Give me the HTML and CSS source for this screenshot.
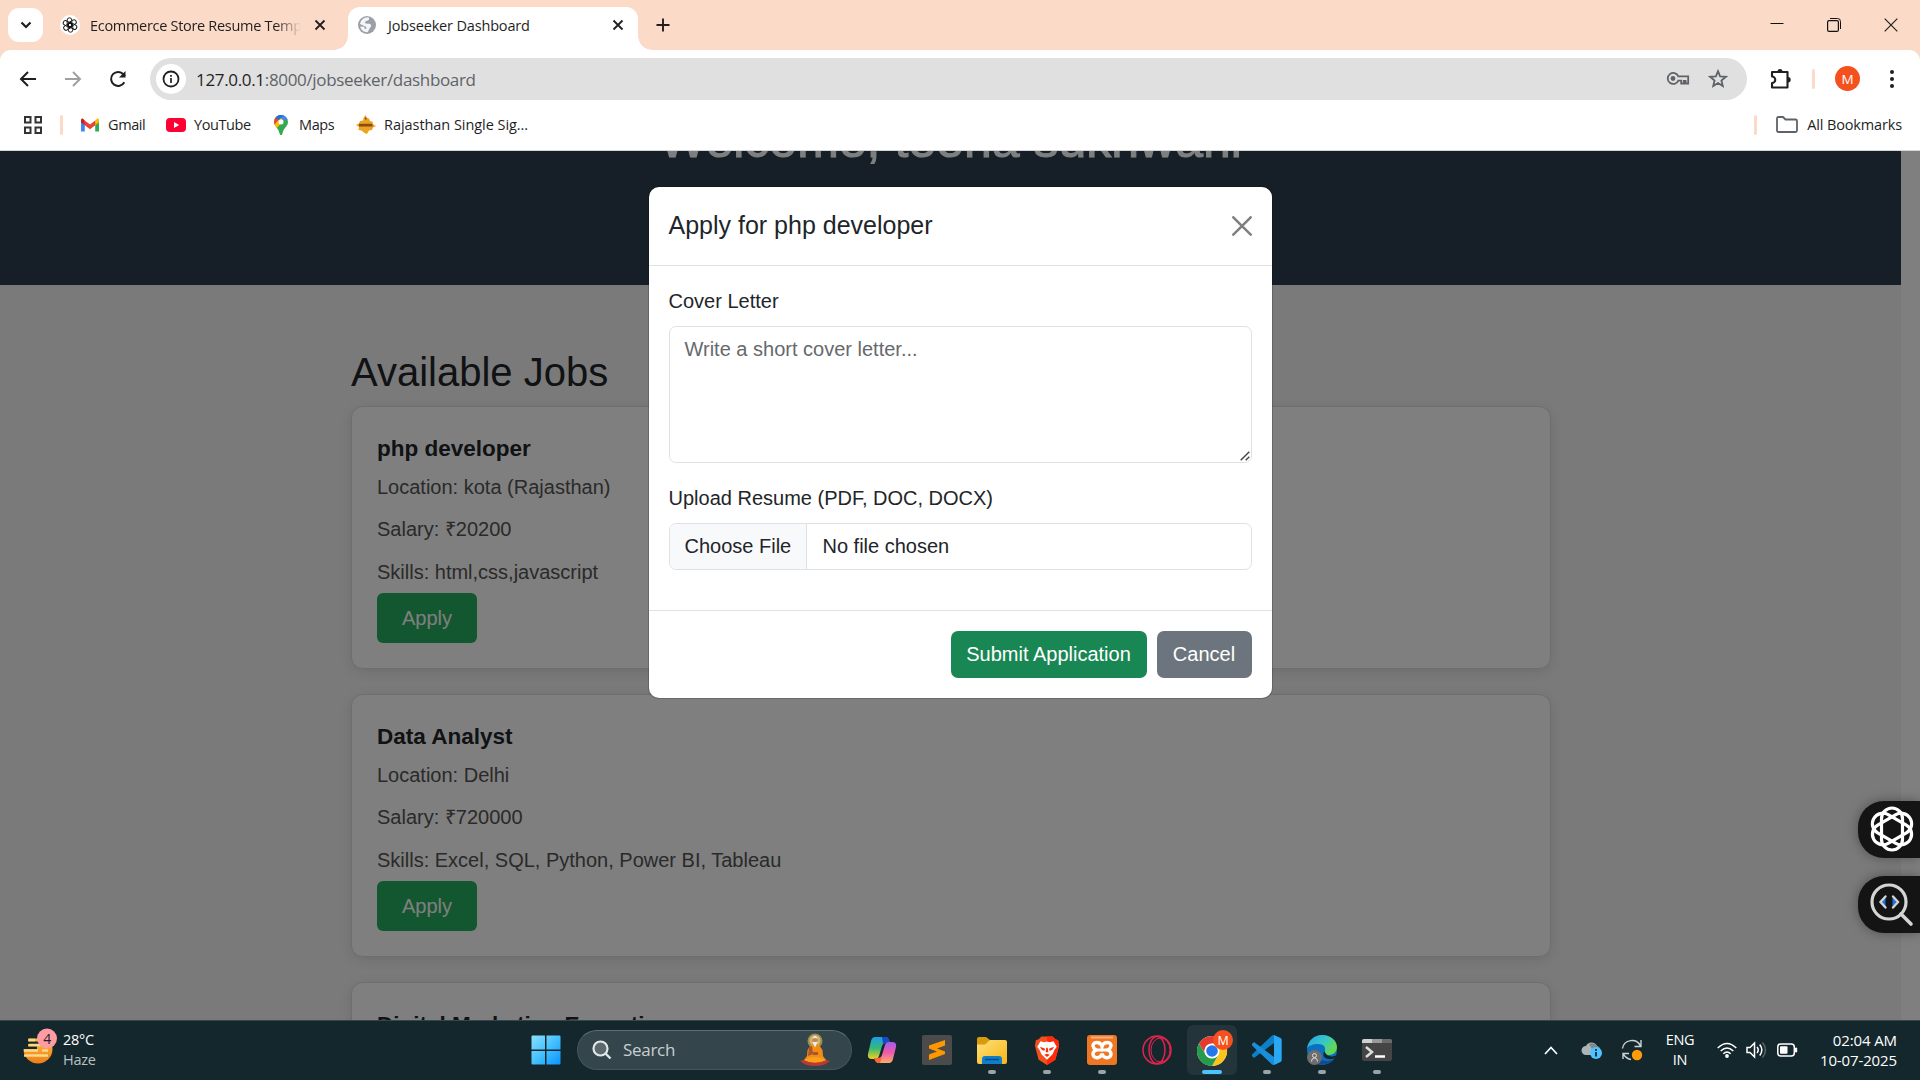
FILE: index.html
```html
<!DOCTYPE html>
<html lang="en">
<head>
<meta charset="utf-8">
<title>Jobseeker Dashboard</title>
<link rel="stylesheet" href="styles.css">
</head>
<body>
<div class="screen">
  <header class="tabstrip">
    <button class="tab-search"><svg width="12" height="8" viewBox="0 0 12 8"><path d="M1.500 1.500 6 6l4.500-4.500" fill="none" stroke="#1f1f1f" stroke-width="2.200"/></svg></button>
    <div class="tab">
      <svg class="favicon" width="20" height="20" viewBox="0 0 20 20"><circle cx="10" cy="10" r="10" fill="#fff"/><g fill="none" stroke="#111" stroke-width=".9"><rect id="k" x="7.200" y="2.800" width="4.600" height="9" rx="2.300"/><use href="#k" transform="rotate(60 10 10)"/><use href="#k" transform="rotate(120 10 10)"/><use href="#k" transform="rotate(180 10 10)"/><use href="#k" transform="rotate(240 10 10)"/><use href="#k" transform="rotate(300 10 10)"/></g></svg>
      <span class="tab-title fade">Ecommerce Store Resume Temp</span>
      <svg class="x" width="12" height="12" viewBox="0 0 12 12"><path d="M1.500 1.500l9 9M10.500 1.500l-9 9" stroke="#1f1f1f" stroke-width="1.800"/></svg>
    </div>
    <div class="tab active">
      <svg class="favicon" width="20" height="20" viewBox="0 0 20 20"><circle cx="10" cy="10" r="9" fill="#9aa0a6"/><path d="M11 2.200c2 .8 1.200 2.800-.2 3.400-1.300.6-2.800.5-2.800 2 0 1.200 2 1.200 4 1.200 2.500 0 2.800 2.600 1.200 3.700-1.200.8-1.200 3.500-2.700 4.700-3.800.2-6.700-2.500-7.200-5.700l4.200.3v2l1.800.2c.4-1.400-.3-3-2-3L3 9c.6-4 4-7 8-6.800z" fill="#f4f5f6"/></svg>
      <span class="tab-title">Jobseeker Dashboard</span>
      <svg class="x" width="12" height="12" viewBox="0 0 12 12"><path d="M1.500 1.500l9 9M10.500 1.500l-9 9" stroke="#1f1f1f" stroke-width="1.800"/></svg>
    </div>
    <svg class="plus" width="14" height="14" viewBox="0 0 14 14"><path d="M7 .5v13M.5 7h13" stroke="#1f1f1f" stroke-width="1.900"/></svg>
    <div class="window-controls">
      <svg width="14" height="14" viewBox="0 0 14 14"><path d="M.5 5.500h13" stroke="#111"/></svg>
      <svg width="14" height="14" viewBox="0 0 14 14"><path d="M3 .5h7.500a3 3 0 0 1 3 3V11" fill="none" stroke="#111"/><rect x=".6" y="2.600" width="10.800" height="10.800" rx="1.500" fill="none" stroke="#111" stroke-width="1.200"/></svg>
      <svg width="14" height="14" viewBox="0 0 14 14"><path d="M.7.7l12.600 12.600M13.300.7.7 13.300" stroke="#222" stroke-width="1.200"/></svg>
    </div>
  </header>

  <div class="toolbar">
    <svg width="24" height="24" viewBox="0 0 24 24"><path d="M12 5l-7 7 7 7M5.500 12H20" fill="none" stroke="#1f1f1f" stroke-width="2"/></svg>
    <svg width="24" height="24" viewBox="0 0 24 24"><path d="M12 5l7 7-7 7M18.500 12H4" fill="none" stroke="#a0a0a0" stroke-width="2"/></svg>
    <svg width="24" height="24" viewBox="0 0 24 24"><path d="M18.300 15.200A7 7 0 1 1 17.500 7.500L19 9" fill="none" stroke="#1f1f1f" stroke-width="2"/><path d="M19.500 4v6.500H13z" fill="#1f1f1f"/></svg>
    <div class="omnibox">
      <span class="info"><svg width="18" height="18" viewBox="0 0 18 18"><circle cx="9" cy="9" r="7.500" fill="none" stroke="#222" stroke-width="1.800"/><path d="M9 8v5M9 5v1.800" stroke="#222" stroke-width="1.700"/></svg></span>
      <span class="url"><b>127.0.0.1</b>:8000/jobseeker/dashboard</span>
      <svg class="key" width="24" height="16" viewBox="0 0 24 16"><path d="M12.300 5.300H22.200V12.500h-2.600V9.800h-1.800v2.700h-2.600V9.600h-2.900a5.500 5.500 0 1 1 0-4.300z" fill="none" stroke="#5f6368" stroke-width="1.800"/><circle cx="7" cy="7.500" r="2.400" fill="#5f6368"/></svg>
      <svg width="20" height="20" viewBox="0 0 20 20"><path d="M10 2.200l2.100 5.200 5.700.4-4.400 3.700 1.400 5.500-4.800-3-4.800 3 1.400-5.500L2.200 7.800l5.700-.4z" fill="none" stroke="#5f6368" stroke-width="1.800"/></svg>
    </div>
    <svg class="puzzle" width="24" height="24" viewBox="0 0 24 24"><path d="M3 5h15.500v15.500H3v-4.500a3 3 0 0 0 0-6.500z" fill="none" stroke="#1f1f1f" stroke-width="2.100" stroke-linejoin="round"/><path d="M8.500 4.500a2.500 2.500 0 0 1 5 0zM19 10a2.700 2.700 0 0 1 0 5.400z" fill="#1f1f1f"/></svg>
    <i class="sep"></i>
    <span class="avatar">M</span>
    <svg class="dots" width="6" height="20" viewBox="0 0 6 20"><g fill="#1f1f1f"><circle cx="3" cy="3" r="2"/><circle cx="3" cy="10" r="2"/><circle cx="3" cy="17" r="2"/></g></svg>
  </div>

  <nav class="bookmarks">
    <svg class="apps" width="18" height="18" viewBox="0 0 18 18"><path d="M1 1h5.500v5.500H1zM11.500 1H17v5.500h-5.500zM1 11.500h5.500V17H1zM11.500 11.500H17V17h-5.500z" fill="none" stroke="#333" stroke-width="2"/></svg>
    <i class="sep"></i>
    <span class="bm gmail"><svg width="20" height="16" viewBox="0 0 20 16"><path d="M1 3v11.500h3.800V6z" fill="#4285f4"/><path d="M19 3v11.500h-3.800V6z" fill="#34a853"/><path d="M15.200 3.500 17 1.800c1-.6 2 0 2 1.200v2.200l-3.800 3z" fill="#fbbc04"/><path d="M4.800 3.500 3 1.800C2 1.200 1 1.800 1 3v2.200l3.800 3z" fill="#c5221f"/><path d="M4.800 3.500 10 7.500l5.200-4v4.700L10 12.300 4.800 8.200z" fill="#ea4335"/></svg><span>Gmail</span></span>
    <span class="bm yt"><svg width="20" height="16" viewBox="0 0 20 16"><rect y="1" width="20" height="14" rx="4" fill="#ff0033"/><path d="M8 5l5.200 3L8 11z" fill="#fff"/></svg><span>YouTube</span></span>
    <span class="bm maps"><svg width="14" height="20" viewBox="0 0 14 20"><clipPath id="pin"><path d="M7 0a7 7 0 0 1 7 7c0 4-4.500 6-5.500 11.200C8.200 19.500 7.700 20 7 20s-1.200-.5-1.500-1.800C4.500 13 0 11 0 7a7 7 0 0 1 7-7z"/></clipPath><g clip-path="url(#pin)"><path d="M0 0h14v20H0z" fill="#34a853"/><path d="M0 0h14L3 13H0z" fill="#fbbc04"/><path d="M0 0h9L0 10z" fill="#ea4335"/><path d="M4 0h10v5L9 5z" fill="#4285f4"/><path d="M1 3 4 0h6L5 5z" fill="#1a73e8"/></g><circle cx="7" cy="7" r="2.500" fill="#fff"/></svg><span>Maps</span></span>
    <span class="bm raj"><svg width="20" height="20" viewBox="0 0 20 20"><path d="M9.500 0l1.500 3 2 .5 1 2.500 3 1-.5 2L20 11l-3 1.500-1 2.500-3 .5-2 3.500-2.500-1-3-2.500-3-.5L3 12 0 10l3-1.500L4 6l3-.500L7.500 3z" fill="#eda322"/><path d="M3 8.800h13.500v2.700H3z" fill="#8a4a12"/><path d="M9 2.500h1.500v2H9z" fill="#8a4a12"/></svg><span>Rajasthan Single Sig...</span></span>
    <i class="sep push"></i>
    <svg class="folder" width="22" height="17" viewBox="0 0 22 17"><path d="M1 14.500V2.500Q1 1 2.500 1H7l2.500 2.500h10Q21 3.500 21 5v9.500q0 1.500-1.500 1.500h-17Q1 16 1 14.500z" fill="none" stroke="#5f6368" stroke-width="1.800"/></svg>
    <span class="all">All Bookmarks</span>
  </nav>

  <div class="viewport">
    <div class="page">
      <section class="hero"><h1>Welcome, teena sukhwani</h1></section>
      <main class="container">
        <h2>Available Jobs</h2>
        <article class="job"><h5>php developer</h5><p>Location: kota (Rajasthan)</p><p>Salary: ₹20200</p><p>Skills: html,css,javascript</p><button class="apply">Apply</button></article>
        <article class="job"><h5>Data Analyst</h5><p>Location: Delhi</p><p>Salary: ₹720000</p><p>Skills: Excel, SQL, Python, Power BI, Tableau</p><button class="apply">Apply</button></article>
        <article class="job"><h5>Digital Marketing Executive</h5></article>
      </main>
    </div>
    <div class="backdrop">
      <div class="modal">
        <div class="modal-header"><h5>Apply for php developer</h5><svg width="20" height="20" viewBox="0 0 20 20"><path d="M1.300 1.300l17.400 17.400M18.700 1.300 1.300 18.700" stroke="#7f7f7f" stroke-width="2.500" stroke-linecap="round"/></svg></div>
        <div class="modal-body">
          <label>Cover Letter</label>
          <div class="letter-wrap">
            <textarea class="letter" placeholder="Write a short cover letter..."></textarea>
            <svg class="grip" width="10" height="10" viewBox="0 0 10 10"><path d="M.7 9.300 9.300.7M5.700 9.300 9.300 5.700" stroke="#444" stroke-width="1.400"/></svg>
          </div>
          <label>Upload Resume (PDF, DOC, DOCX)</label>
          <div class="file"><span class="choose">Choose File</span><span class="none">No file chosen</span></div>
        </div>
        <div class="modal-footer"><button class="btn submit">Submit Application</button><button class="btn cancel">Cancel</button></div>
      </div>
    </div>
    <div class="widgets">
      <div class="widget"><svg width="46" height="48" viewBox="-23 -24 46 48"><g fill="none" stroke="#fff" stroke-width="3.200"><rect id="w" x="-10.500" y="-21" width="21" height="42" rx="10.500"/><use href="#w" transform="rotate(60)"/><use href="#w" transform="rotate(120)"/></g></svg></div>
      <div class="widget"><svg width="46" height="48" viewBox="0 0 46 48"><circle cx="20" cy="22" r="17" fill="none" stroke="#d4d4d4" stroke-width="3.200"/><path d="M32 34l10 10" stroke="#d4d4d4" stroke-width="3.600" stroke-linecap="round"/><path d="M16.500 17.500v9l-4-4.500zM23.500 17.500v9l4-4.500z" fill="#1a73e8"/><path d="M16.500 16.500l-5 5.500 5 5.500M24 16.500l5 5.500-5 5.500" fill="none" stroke="#d4d4d4" stroke-width="2.400" stroke-linecap="round"/></svg></div>
    </div>
  </div>

  <footer class="taskbar">
    <div class="weather">
      <svg width="36" height="38" viewBox="0 0 36 38"><defs><linearGradient id="sun" x1="0" y1="0" x2="0" y2="1"><stop offset="0" stop-color="#ffc83d"/><stop offset="1" stop-color="#ef7d18"/></linearGradient></defs><circle cx="15" cy="21" r="14.500" fill="url(#sun)"/><path d="M0 6h30v4.500H0zM0 13.500h16V16H0zM0 18.500h14V21H0zM0 8h5v12H0z" fill="#14272d"/><path d="M6 12h6M6 17h12M1 22.500h14M19 22.500h6M1 27.500h24" stroke="#f7d98b" stroke-width="2.600"/><circle cx="24" cy="10.500" r="10" fill="#ff9ba3"/><text x="24" y="15.500" text-anchor="middle" font-size="14" fill="#222">4</text></svg>
      <div><div>28°C</div><div class="dim">Haze</div></div>
    </div>
    <svg class="start" width="30" height="30" viewBox="0 0 30 30"><defs><linearGradient id="win" x1="0" y1="0" x2="1" y2="1"><stop offset="0" stop-color="#8be0ff"/><stop offset=".5" stop-color="#45c1ff"/><stop offset="1" stop-color="#0a95ff"/></linearGradient></defs><path d="M.5 1.500Q.5.500 1.500.5H14v14H.5zM15.500.5h13q1 0 1 1v13h-14zM.5 16H14v13.500H1.500q-1 0-1-1zM15.500 16h14v12.500q0 1-1 1h-13z" fill="url(#win)"/></svg>
    <div class="search">
      <svg width="20" height="20" viewBox="0 0 20 20"><circle cx="8.500" cy="8.500" r="7" fill="#5b696e" stroke="#e2e6e7" stroke-width="2.200"/><path d="M13.500 13.500l5 5" stroke="#e2e6e7" stroke-width="2.400"/></svg>
      <span>Search</span>
      <svg class="guru" width="32" height="34" viewBox="0 0 32 34"><circle cx="16" cy="8" r="7.500" fill="#9c8b4c"/><circle cx="16" cy="7.500" r="5.500" fill="#cdb868"/><path d="M1 28q15-6 30 0-5 5-15 5T1 28z" fill="#b93a32"/><path d="M12 12q4-2 8 0l3.500 5 .5 6 3 4q-11 5-22 0l3-4 .5-6z" fill="#f28c16"/><path d="M10 14l3-1 1 8-5 2zM14 19h5v3h-5z" fill="#a8562a"/><path d="M5 27q11-6 22 0-11 5-22 0z" fill="#fba21d"/><ellipse cx="16" cy="7" rx="2.800" ry="3.800" fill="#c98556"/><path d="M13 6q3-6.500 6 0-3-2-6 0zM13.200 8.500q2.800 1 5.600 0l-2.800 6z" fill="#eee"/></svg>
    </div>
    <div class="tasks">
      <span class="task"><svg width="30" height="30" viewBox="0 0 30 30"><defs><linearGradient id="ca" x1="0" y1="0" x2="0" y2="1"><stop offset="0" stop-color="#1b9de8"/><stop offset=".5" stop-color="#35b878"/><stop offset="1" stop-color="#f5cf1d"/></linearGradient><linearGradient id="cb" x1="0" y1="0" x2="0" y2="1"><stop offset="0" stop-color="#a15cf0"/><stop offset=".5" stop-color="#ee5aa9"/><stop offset="1" stop-color="#ffac6b"/></linearGradient></defs><path d="M8 2h11q2 0 3 3l1 3h-4q-3 0-4 3l-3 10q-1 3-4 3H5q-5 0-4-5L4 6q1-4 4-4z" fill="url(#ca)"/><path d="M15 2h4q2 0 3 3l1 3h-4q-2 0-3 1z" fill="#1a48ca"/><path d="M22 28H11q-2 0-3-3l-1-2h4q3 0 4-3l3-10q1-3 4-3h3q5 0 4 5l-3 12q-1 4-4 4z" fill="url(#cb)"/><path d="M7 23h4q3 0 4-1l-2 6h-2q-2 0-3-3z" fill="#fa653c"/></svg></span>
      <span class="task"><svg width="30" height="30" viewBox="0 0 30 30"><rect width="30" height="30" rx="2" fill="#4b4b4b"/><path d="M7 10.500 23 5v5.500l-8 3 8 3V19L7 25v-5.500l8-3-8-3z" fill="#ff9800"/></svg></span>
      <span class="task run"><svg width="32" height="30" viewBox="0 0 32 30"><defs><linearGradient id="fo" x1="0" y1="0" x2="1" y2="1"><stop offset="0" stop-color="#ffe07a"/><stop offset="1" stop-color="#f7b616"/></linearGradient></defs><path d="M1 4q0-2 2-2h7l4 3v8H1z" fill="#d99a0b"/><path d="M1 9.500h8L14 5h15q2 0 2 2v20q0 2-2 2H3q-2 0-2-2z" fill="url(#fo)"/><path d="M6 29v-5q0-3 3-3h14q3 0 3 3v5z" fill="#0f7fc9"/><path d="M9 24.500h14" stroke="#074a80" stroke-width="1.500"/></svg></span>
      <span class="task run"><svg width="26" height="31" viewBox="0 0 28 32"><path d="M8 1h12l3 3 3 1 1 6-4 15-9 5.500L5 26 1 11l1-6 3-1z" fill="#f4501e"/><path d="M14 1h6l3 3 3 1 1 6-4 15-9 5.500z" fill="#ff2a09"/><path d="M7 6l4 1 3-.7 3 .7 4-1 3.500 6-2.500 3.500L20 20l-6 6-6-6-2-4.500L3.500 12z" fill="#fff"/><path d="M6.500 12l5.500 2-1 2.500-3-1.500zM21.500 12L16 14l1 2.500 3-1.500zM11 20.500l3-1 3 1-3 2.500zM13.200 13h1.600l.7 5h-3z" fill="#f7320f"/></svg></span>
      <span class="task run"><svg width="30" height="30" viewBox="0 0 30 30"><rect width="30" height="30" rx="3" fill="#ef7622"/><path d="M4 1.500h22v2H4z" fill="#f8b080"/><path d="M15 11.500c-1-3.500-3-4-5.500-4S5.800 9.500 6 11s1.500 3 3 4c-2 1-3.300 2.500-3 4.500s2 3.500 4.500 3.200 4-1.700 4.500-4.200c.5 2.500 2 3.900 4.500 4.200s4.200-1.200 4.500-3.200-1-3.500-3-4.500c1.500-1 2.800-2.500 3-4s-1-3.500-3.500-3.500-4.500.5-5.500 4z" fill="none" stroke="#fff" stroke-width="3.400"/><path d="M9 15h12" stroke="#fff" stroke-width="3"/></svg></span>
      <span class="task"><svg width="30" height="30" viewBox="0 0 30 30"><g fill="none" stroke="#e0234e" stroke-width="1.500"><circle cx="15" cy="15" r="14"/><ellipse cx="15" cy="15" rx="8" ry="13.500"/><ellipse cx="18.500" cy="15" rx="9.500" ry="12" stroke-width="1"/></g></svg></span>
      <span class="task run on"><svg width="36" height="36" viewBox="0 0 36 36"><circle cx="15" cy="21" r="15" fill="#fff"/><path d="M2 13.500a15 15 0 0 1 26 0H15a7.500 7.500 0 0 0-6.500 11.300z" fill="#e33b2e"/><path d="M28 13.500A15 15 0 0 1 15 36l6.500-11.300A7.500 7.500 0 0 0 15 13.500z" fill="#fcc31e"/><path d="M2 13.500A15 15 0 0 0 15 36l6.500-11.300a7.500 7.500 0 0 1-13 0z" fill="#259b4b"/><circle cx="15" cy="21" r="7.300" fill="#fff"/><circle cx="15" cy="21" r="5.800" fill="#2576ea"/><circle cx="26" cy="10" r="10" fill="#f4511e"/><text x="26" y="14.500" text-anchor="middle" font-size="12.500" fill="#fff">M</text></svg></span>
      <span class="task run"><svg width="30" height="30" viewBox="0 0 30 30"><path d="M22 0v8L3 22.300q-1 .7-2 0l-1-1.300q-.5-1 .3-1.800L19.500 1q1-1 2.500-1z" fill="#0b80c9"/><path d="M22 30v-8L3 7.700q-1-.7-2 0L0 9q-.5 1 .3 1.800L19.500 29q1 1 2.500 1z" fill="#1a8ed8"/><path d="M22 0l6.500 3q1.200.6 1.200 2v20q0 1.400-1.200 2L22 30z" fill="#29a8f4"/></svg></span>
      <span class="task run"><svg width="30" height="30" viewBox="0 0 30 30"><defs><linearGradient id="ed" x1="0" y1="0" x2="1" y2=".5"><stop offset="0" stop-color="#28a4e8"/><stop offset=".6" stop-color="#38c8c4"/><stop offset="1" stop-color="#65d94c"/></linearGradient></defs><circle cx="15" cy="15" r="15" fill="#0d6fc2"/><path d="M0 14C1 5 8 0 15 0c9 0 15 6 15 12 0 5-4 8-8 8-3 0-5-1-4.500-3 2-5-1-8-6-8-6 0-11 2-11.500 5z" fill="url(#ed)"/><path d="M30.500 20c-5 2.500-11 2-13-4-2 3-1.500 6 2 7.500 4 1.500 8 .5 10-1.500z" fill="#14272d"/><path d="M12 18c-1 6 6 11 15 6-4 6-14 7-18 4z" fill="#134b92"/><circle cx="7.500" cy="22.500" r="7.500" fill="#6d6d6d"/><circle cx="7.500" cy="20.500" r="2" fill="none" stroke="#ddd"/><path d="M4.500 26.500q0-3.500 3-3.500t3 3.500" fill="none" stroke="#ddd"/></svg></span>
      <span class="task run"><svg width="30" height="22" viewBox="0 0 30 22"><rect width="30" height="22" rx="2" fill="#454545"/><path d="M0 4V2q0-2 2-2h8v4z" fill="#d0d0d0"/><path d="M10 0h10v4H10z" fill="#999"/><path d="M20 0h8q2 0 2 2v2H20z" fill="#6b6b6b"/><path d="M4 8l6 5-6 5" fill="none" stroke="#ddd" stroke-width="2.500"/><path d="M13 17.500h10" stroke="#fff" stroke-width="2.500"/></svg></span>
    </div>
    <div class="tray">
      <svg class="chev" width="14" height="9" viewBox="0 0 14 9"><path d="M1 8l6-6.500L13 8" fill="none" stroke="#fff" stroke-width="1.700"/></svg>
      <svg class="cloud" width="21" height="18" viewBox="0 0 21 18"><path d="M5 14a4.500 4.500 0 0 1 0-9 6 6 0 0 1 11 0q3 1 3 4l-4 5z" fill="#aeb4b6"/><path d="M8 3a6 6 0 0 1 8 2q3 1 3 4l-8-1z" fill="#7f888b"/><circle cx="15" cy="12" r="6" fill="#4fc3ff"/><path d="M15 11v4.500M15 8v1.800" stroke="#102a36" stroke-width="1.800"/></svg>
      <svg class="sync" width="22" height="22" viewBox="0 0 22 22"><path d="M1.500 9.500A9.500 9.500 0 0 1 19.500 7M20 1v6.500h-6.500M2 20v-5.500h6M2.500 15.500Q6 20 10 20.500" fill="none" stroke="#cdd3d5" stroke-width="1.400"/><circle cx="16" cy="16" r="5.200" fill="#ff9a0a"/></svg>
      <div class="lang"><div>ENG</div><div>IN</div></div>
      <svg class="wifi" width="20" height="16" viewBox="0 0 20 16"><g fill="none" stroke="#fff" stroke-width="1.500"><path d="M.7 6q9.300-9 18.600 0M3.700 9q6.300-6 12.600 0M6.300 11.800q3.700-3.600 7.400 0"/></g><circle cx="10" cy="14" r="1.900" fill="#fff"/></svg>
      <svg class="vol" width="21" height="18" viewBox="0 0 21 18"><g fill="none" stroke="#fff" stroke-width="1.500"><path d="M1 6.500h3L8.500 2v14L4 11.500H1zM11 6q2.500 3 0 6M13.700 3.500q4.300 5.500 0 11"/><path d="M16.500 1.500q6 7.500 0 15" stroke="#56656a"/></g></svg>
      <svg class="bat" width="21" height="14" viewBox="0 0 21 14"><rect x=".8" y="1" width="16.500" height="12" rx="3" fill="none" stroke="#fff" stroke-width="1.500"/><rect x="3" y="3.300" width="7.500" height="7.400" rx="1" fill="#fff"/><path d="M18.500 5h1.200v4h-1.200z" stroke="#fff" fill="#fff"/></svg>
      <div class="clock"><div>02:04 AM</div><div>10-07-2025</div></div>
    </div>
  </footer>
</div>
</body>
</html>
```

FILE: styles.css
```css
* { box-sizing: border-box; }
body { margin: 0; background: #fff; overflow: hidden; }
button { font: inherit; border: 0; padding: 0; }
svg { display: block; flex: none; }
h1, h2, h5, p { margin: 0; }

.screen {
  width: 1920px; height: 1080px;
  display: flex; flex-direction: column;
  font-family: "Open Sans", "Noto Sans", sans-serif;
  font-size: 14.5px; color: #1f1f1f; white-space: nowrap;
  background: #fcdac8;
}

/* tab strip */
.tabstrip { display: flex; height: 50px; flex: none; align-items: center; padding-left: 8px; }
.tab-search { width: 35px; height: 34px; border-radius: 11px; background: #fff; display: grid; place-items: center; }
.tab { display: flex; align-items: center; width: 288px; padding-left: 17px; height: 100%; position: relative; }
.tab-title { margin-left: 11px; width: 213px; letter-spacing: -.17px; }
.fade { margin-left: 10px; overflow: hidden; width: 211px; letter-spacing: -.3px; -webkit-mask-image: linear-gradient(90deg, #000 88%, transparent); mask-image: linear-gradient(90deg, #000 88%, transparent); }
.x { margin-left: 13px; }
.tab.active { margin: 7px 0 0 17px; width: 290px; height: 43px; padding: 0 0 7px 9px; background: #fff; border-radius: 12px 12px 0 0; }
.active .x { margin-left: 11px; }
.tab.active::before, .tab.active::after { content: ""; position: absolute; bottom: 0; width: 14px; height: 14px; }
.tab.active::before { left: -14px; background: radial-gradient(circle at 0 0, transparent 13.500px, #fff 14px); }
.tab.active::after { right: -14px; background: radial-gradient(circle at 100% 0, transparent 13.500px, #fff 14px); }
.plus { margin-left: 18px; }
.window-controls { display: flex; gap: 43px; margin-left: auto; padding-right: 22px; }

/* toolbar */
.toolbar { display: flex; align-items: center; height: 57px; flex: none; padding: 0 25px 0 16px; background: #fff; border-radius: 11px 11px 0 0; }
.toolbar > svg + svg { margin-left: 21px; }
.omnibox { display: flex; align-items: center; width: 1597px; height: 42px; margin: 1px 0 0 20px; border-radius: 21px; background: #e0e0e0; padding: 0 19px 0 6px; }
.info { width: 30px; height: 30px; border-radius: 50%; background: #fff; display: grid; place-items: center; }
.url { margin: 0 auto 0 10px; font-size: 17px; letter-spacing: -.33px; color: #5f6368; }
.url b { font-weight: 400; color: #1f1f1f; }
.key { margin-right: 18px; }
.puzzle { margin-left: 22px; }
.sep { width: 3px; height: 20px; border-radius: 2px; background: #fcdac8; flex: none; }
.toolbar .sep { margin-left: 19px; }
.avatar { width: 25px; height: 25px; border-radius: 50%; background: #f4511e; color: #fff; display: grid; place-items: center; font-size: 13.5px; margin-left: 20px; }
.dots { margin-left: auto; }

/* bookmarks */
.bookmarks { display: flex; align-items: center; height: 44px; flex: none; padding: 0 18px 8px 24px; background: #fff; border-bottom: 1px solid #d5d5d5; }
.bookmarks .sep { margin-left: 18px; }
.bm { display: flex; align-items: center; gap: 8px; letter-spacing: -.4px; }
.gmail { margin-left: 17px; width: 86px; }
.yt { width: 108px; }
.maps { gap: 11px; width: 82px; }
.raj { letter-spacing: -.05px; }
.bookmarks .push { margin-left: auto; }
.folder { margin: 0 9px 0 19px; }
.all { letter-spacing: -.15px; }

/* page */
.viewport { position: relative; height: 869px; flex: none; overflow: hidden; background: #fff; font-family: "Liberation Sans", Arial, sans-serif; font-size: 20px; line-height: 1.5; }
.page { width: 1901px; height: 869px; overflow: hidden; background: #f4f4f4; }
.hero { height: 134px; background: #2c3e50; color: #fff; text-align: center; overflow: hidden; }
.hero h1 { margin-top: -41px; font-size: 50px; font-weight: 400; line-height: 60px; -webkit-text-stroke: 1px #fff; }
.container { width: 1200px; margin: 0 0 0 351px; padding-top: 63px; }
h2 { font-size: 40px; font-weight: 400; line-height: 48px; color: #212529; margin-bottom: 10px; }
.job { height: 263px; margin-bottom: 25px; padding: 24.6px 25px; background: #fff; border: 1px solid #ddd; border-radius: 12px; box-shadow: 0 3px 12px rgba(0, 0, 0, .1); }
.job h5 { font-size: 22.5px; line-height: 34px; margin-bottom: 6px; color: #212529; }
.job p { color: #555; line-height: 30px; margin-bottom: 12.5px; }
.apply { display: block; margin-top: -6.6px; width: 100px; height: 50px; border-radius: 6px; background: #27ae60; color: #fff; }

/* modal */
.backdrop { position: absolute; inset: 0; display: flex; justify-content: center; align-items: flex-start; padding-top: 36px; background: rgba(0, 0, 0, .5); }
.modal { width: 623px; height: 511px; background: #fff; border-radius: 10px; color: #212529; box-shadow: 0 0 0 1px rgba(0, 0, 0, .18); }
.modal-header { display: flex; justify-content: space-between; align-items: center; height: 79px; padding: 0 20px; border-bottom: 1px solid #dee2e6; }
.modal-header h5 { font-size: 25px; font-weight: 400; }
.modal-body { height: 344px; padding: 20px; }
.modal-body label { display: block; line-height: 30px; margin-bottom: 10px; }
.letter-wrap { position: relative; margin-bottom: 20px; }
.letter { display: block; width: 100%; height: 137px; margin: 0; padding: 7px 15px; border: 1px solid #dee2e6; border-radius: 7px; font: inherit; resize: none; outline: 0; }
.letter::placeholder { color: #66696d; }
.grip { position: absolute; right: 2px; bottom: 2px; }
.file { display: flex; height: 47px; line-height: 45px; border: 1px solid #dee2e6; border-radius: 7px; overflow: hidden; }
.choose { width: 137px; padding-left: 15px; background: #f8f9fa; border-right: 1px solid #dee2e6; }
.none { padding-left: 16px; }
.modal-footer { display: flex; justify-content: flex-end; gap: 10px; padding: 20px; border-top: 1px solid #dee2e6; }
.btn { height: 47px; padding-bottom: 2px; border-radius: 7px; color: #fff; }
.submit { width: 196px; background: #198754; }
.cancel { width: 95px; background: #6c757d; }

.widgets { position: absolute; right: 0; top: 650px; display: grid; gap: 18px; }
.widget { width: 62px; height: 57px; padding: 4px 0 0 11px; background: #141414; border-radius: 26px 0 0 26px; box-shadow: 0 0 12px rgba(0, 0, 0, .35); }

/* taskbar */
.taskbar { display: flex; align-items: center; flex: 1; padding-bottom: 1px; background: #14272d; border-top: 1px solid #35474c; color: #fff; font-size: 14.5px; line-height: 20px; }
.weather { display: flex; width: 531px; padding-left: 23px; gap: 4px; letter-spacing: -.3px; }
.weather svg { margin-top: -2px; }
.dim { color: #b9c1c3; }
.search { display: flex; align-items: center; width: 275px; height: 40px; margin-left: 16px; padding: 0 20px 0 14px; border-radius: 20px; background: #34464c; border: 1px solid #45565b; border-top-color: #5e6e72; color: #c9cfd1; font-size: 17px; letter-spacing: -.3px; }
.search span { margin-left: 11px; }
.guru { margin-left: auto; }
.tasks { display: flex; margin-left: 2px; }
.task { position: relative; width: 55px; height: 50px; display: grid; place-items: center; }
.run::after { content: ""; position: absolute; left: 24px; bottom: 1px; width: 8px; height: 4px; border-radius: 2px; background: #9aa3a5; }
.on { width: 50px; margin: 0 2.5px; border-radius: 6px; background: #23353b; }
.on svg { margin: -5px 0 0 7px; }
.on::after { left: 15px; width: 20px; background: #4cc2ff; }
.tray { display: flex; align-items: center; margin-left: auto; padding-right: 23px; text-align: center; }
.cloud { margin-left: 23px; }
.sync { margin-left: 19px; }
.lang { width: 36px; margin-left: 19px; letter-spacing: -.3px; }
.wifi { margin-left: 19px; }
.vol { margin-left: 9px; }
.bat { margin-left: 10px; }
.clock { margin-left: 19px; width: 80px; text-align: right; font-size: 15px; letter-spacing: -.12px; }
```
